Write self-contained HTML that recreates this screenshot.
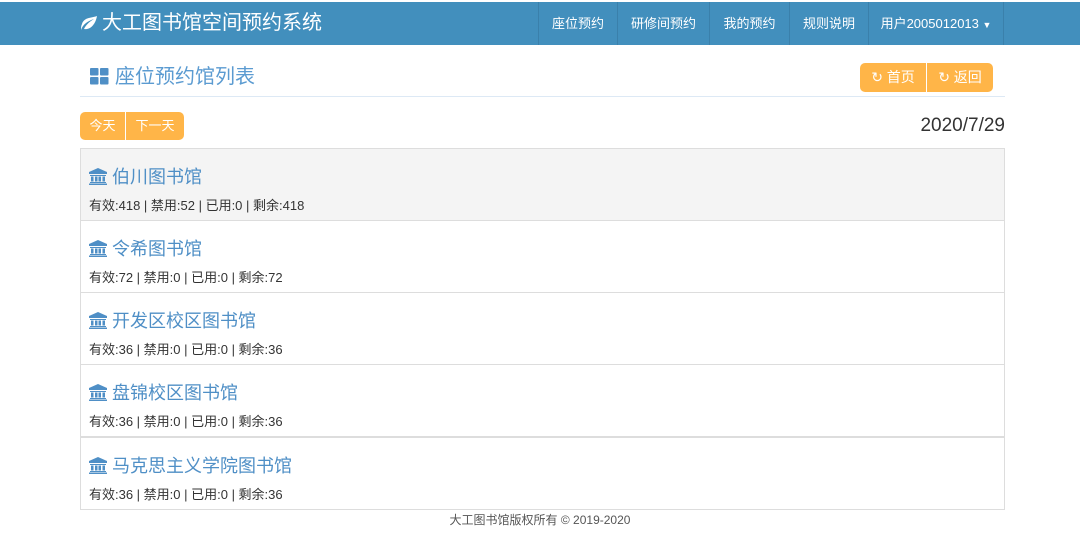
<!DOCTYPE html>
<html><head><meta charset="utf-8"><style>
*{box-sizing:border-box;margin:0;padding:0}
body{width:1080px;height:539px;background:#fff;font-family:"Liberation Sans","Noto Sans CJK SC",sans-serif;position:relative;overflow:hidden;color:#333}
.nav{position:absolute;left:0;top:2px;width:1080px;height:43px;background:#428fbd}
.brand{position:absolute;left:80px;top:0;height:43px;line-height:43px;color:#fff;font-size:20px}
.brand svg{vertical-align:-2px;margin-right:4px}
.ni{position:absolute;top:0;height:43px;line-height:43px;color:#fff;font-size:13px;text-align:center;border-left:1px solid #3a80ab}
.title{position:absolute;left:90px;top:64px;font-size:20px;color:#5b9bd1;line-height:26px}
.title .g{display:inline-block;vertical-align:-2px;margin-right:6px}
.hr{position:absolute;left:80px;top:96px;width:925px;height:1px;background:#dde9f5}
.btn{position:absolute;background:#ffb548;color:#fff;font-size:14px;text-align:center}
.date{position:absolute;right:75px;top:115px;font-size:19px;color:#333}
.row{position:absolute;left:80px;width:925px;height:73px;border:1px solid #ddd;background:#fff}
.row h3{position:absolute;left:8px;top:16px;font-size:18px;font-weight:normal;color:#4f8fc6;line-height:24px}
.row h3 svg{vertical-align:-2px;margin-right:5px}
.row p{position:absolute;left:8px;top:46px;font-size:13px;color:#333}
.foot{position:absolute;top:511px;width:1080px;text-align:center;font-size:12px;color:#555}
</style></head><body>
<svg width="0" height="0" style="position:absolute"><symbol id="bk" viewBox="0 0 18 17"><path d="M9 0L0 4V6H18V4Z M1 7H17V8H1Z M2 8.5H4.5V13.5H2Z M6 8.5H8.5V13.5H6Z M9.5 8.5H12V13.5H9.5Z M13.5 8.5H16V13.5H13.5Z M1 14H17V15H1Z M0 15.5H18V17H0Z" fill="#4f8fc6"/></symbol></svg>
<div class="nav">
<div class="brand"><svg width="18" height="16" viewBox="0 0 18 16"><path d="M1 15C3 9 8 6 14 4C9 7 6 10 4 14C8 15 15 12 17 1C12 3 4 2 2 9C1 11 1 13 1 15Z" fill="#fff"/></svg>大工图书馆空间预约系统</div>
<div class="ni" style="left:538px;width:79px">座位预约</div>
<div class="ni" style="left:617px;width:92px">研修间预约</div>
<div class="ni" style="left:709px;width:80px">我的预约</div>
<div class="ni" style="left:789px;width:79px">规则说明</div>
<div class="ni" style="left:868px;width:136px;border-right:1px solid #3a80ab">用户2005012013 <span style="font-size:9px">▼</span></div>
</div>
<div class="title"><svg class="g" width="19" height="17" viewBox="0 0 19 17"><rect x="0" y="0" width="8.5" height="7.5" rx="1" fill="#4f8fc6"/><rect x="10" y="0" width="8.5" height="7.5" rx="1" fill="#4f8fc6"/><rect x="0" y="9" width="8.5" height="7.5" rx="1" fill="#4f8fc6"/><rect x="10" y="9" width="8.5" height="7.5" rx="1" fill="#4f8fc6"/></svg>座位预约馆列表</div>
<div class="btn" style="left:860px;top:63px;width:66px;height:29px;line-height:29px;border-radius:5px 0 0 5px">↻ 首页</div>
<div class="btn" style="left:927px;top:63px;width:66px;height:29px;line-height:29px;border-radius:0 5px 5px 0">↻ 返回</div>
<div class="hr"></div>
<div class="btn" style="left:80px;top:112px;width:45px;height:28px;line-height:28px;font-size:13px;border-radius:5px 0 0 5px">今天</div>
<div class="btn" style="left:126px;top:112px;width:58px;height:28px;line-height:28px;font-size:13px;border-radius:0 5px 5px 0">下一天</div>
<div class="date">2020/7/29</div>
<div class="row" style="top:148px;background:#f4f4f4"><h3><svg width="18" height="17"><use href="#bk"/></svg>伯川图书馆</h3><p>有效:418 | 禁用:52 | 已用:0 | 剩余:418</p></div>
<div class="row" style="top:220px"><h3><svg width="18" height="17"><use href="#bk"/></svg>令希图书馆</h3><p>有效:72 | 禁用:0 | 已用:0 | 剩余:72</p></div>
<div class="row" style="top:292px"><h3><svg width="18" height="17"><use href="#bk"/></svg>开发区校区图书馆</h3><p>有效:36 | 禁用:0 | 已用:0 | 剩余:36</p></div>
<div class="row" style="top:364px"><h3><svg width="18" height="17"><use href="#bk"/></svg>盘锦校区图书馆</h3><p>有效:36 | 禁用:0 | 已用:0 | 剩余:36</p></div>
<div class="row" style="top:437px"><h3><svg width="18" height="17"><use href="#bk"/></svg>马克思主义学院图书馆</h3><p>有效:36 | 禁用:0 | 已用:0 | 剩余:36</p></div>
<div class="foot">大工图书馆版权所有 © 2019-2020</div>
</body></html>
